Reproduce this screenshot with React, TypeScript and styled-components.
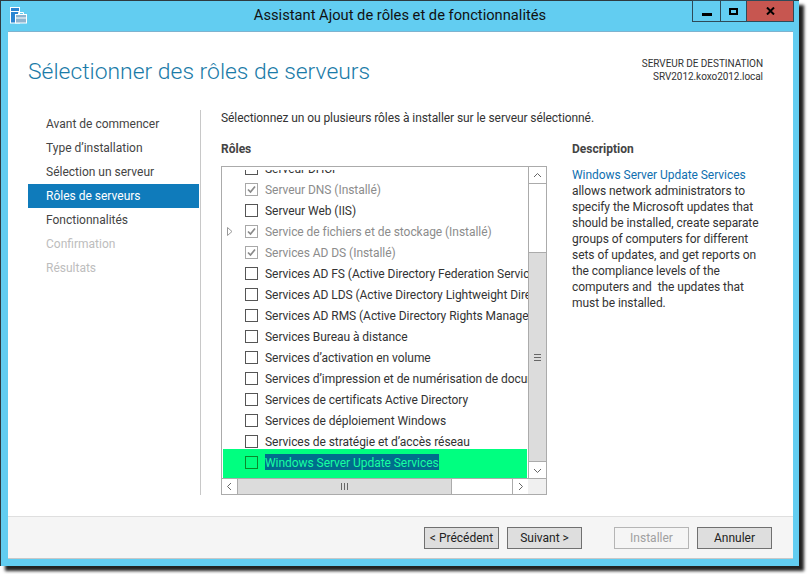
import React from "react";
import styled, { createGlobalStyle } from "styled-components";

const Global = createGlobalStyle`
  html, body { margin: 0; padding: 0; background: #fff; }
  body { min-width: 809px; min-height: 574px; font-family: Roboto, "Open Sans", "Liberation Sans", sans-serif; font-size: 12px; color: #333; }
`;

const Frame = styled.div`
  width: 799px; height: 566px; box-sizing: border-box;
  background: #62cdf1;
  border-top: 1px solid #2e3a40; border-left: 1px solid #2e3a40;
  box-shadow: 5px 5px 3px #222;
  display: flex; flex-direction: column;
`;
const TitleBar = styled.div`
  height: 30px; display: grid; grid-template-columns: 1fr auto 1fr; align-items: start;
`;
const AppIcon = styled.svg`margin: 6px 0 0 9px; display: block;`;
const Title = styled.div`font-size: 14.7px; color: #111; line-height: 29px;`;
const Controls = styled.div`display: flex; justify-content: flex-end; padding-right: 5px; margin-top: -1px;`;
const Control = styled.div<{ $w: number; $close?: boolean }>`
  width: ${p => p.$w}px; height: 22px; box-sizing: border-box;
  border: 1px solid #2e4a58; margin-left: -1px;
  background: ${p => (p.$close ? "#c75650" : "transparent")};
  display: flex; align-items: center; justify-content: center;
`;
const MinGlyph = styled.div`width: 10px; height: 3px; background: #000; margin-top: 6px;`;
const MaxGlyph = styled.div`width: 9px; height: 7px; border: 2px solid #000; box-sizing: border-box;`;

const Client = styled.div`
  flex: 1; margin: 0 6px 7px 7px; background: #fff; display: flex; flex-direction: column;
  border-top: 1px solid #7fb3cf;
`;
const Header = styled.header`
  height: 78px; box-sizing: border-box; padding: 23px 30px 0 20px; display: flex; justify-content: space-between;
`;
const Heading = styled.h1`
  margin: 0; font-weight: 300; font-size: 22.9px; line-height: 33px; color: #1a7ba8;
`;
const Destination = styled.div`
  text-align: right; font-size: 10px; line-height: 13px; color: #333; margin-top: 2px;
  letter-spacing: -0.05px;
`;
const Body = styled.div`flex: 1; display: flex; padding-left: 20px; min-height: 0;`;
const Nav = styled.nav`
  width: 173px; height: 385px; box-sizing: border-box; padding-top: 2px; border-right: 1px solid #c8c8c8;
`;
const NavItem = styled.div<{ $active?: boolean; $disabled?: boolean }>`
  height: 24px; line-height: 24px; padding-left: 18px; width: 171px; box-sizing: border-box;
  font-size: 12px;
  background: ${p => (p.$active ? "#0f7bbb" : "transparent")};
  color: ${p => (p.$active ? "#fff" : p.$disabled ? "#bdbdbd" : "#444")};
`;
const Main = styled.main`
  padding-left: 20px; flex: 1;
`;
const Intro = styled.p`margin: 0; line-height: 16px; height: 16px; font-size: 12px; color: #333; letter-spacing: -0.08px;`;
const Columns = styled.div`display: flex; margin-top: 15px;`;
const RolesCol = styled.section`width: 326px;`;
const DescCol = styled.aside`width: 190px; margin-left: 25px;`;
const Label = styled.h2`margin: 0; font-size: 12px; font-weight: 700; line-height: 16px; height: 24px; color: #444;`;

const ListBox = styled.div`
  width: 326px; height: 329px; box-sizing: border-box; border: 1px solid #ababab; margin-top: 1px;
  display: grid; grid-template-columns: 306px 18px; grid-template-rows: 311px 16px; background: #fff;
`;
const Rows = styled.div`overflow: hidden; position: relative; border-top: 3px solid #fff;`;
const RowsInner = styled.div`margin-top: -12px;`;
const Row = styled.div<{ $dim?: boolean; $hi?: boolean }>`
  height: 21px; display: flex; align-items: center; white-space: nowrap; position: relative; font-size: 12px;
  letter-spacing: -0.05px;
  color: ${p => (p.$dim ? "#8c8c8c" : p.$hi ? "#18ffa0" : "#333")};
  ${p => p.$hi && `&::before { content: ""; position: absolute; left: 1px; right: 1px; top: -3px; height: 29px; background: #00ff80; }`}
`;
const Expander = styled.span`width: 23px; flex: none; display: flex; justify-content: center; padding-right: 8px; box-sizing: border-box; position: relative;`;
const Box = styled.span<{ $dim?: boolean; $hi?: boolean }>`
  width: 13px; height: 13px; box-sizing: border-box; flex: none; position: relative;
  border: 1px solid ${p => (p.$hi ? "#0a8a2a" : p.$dim ? "#a8a8a8" : "#555")};
  display: flex; align-items: center; justify-content: center;
`;
const RowText = styled.span<{ $hi?: boolean }>`
  margin: 2px 0 0 7px; align-self: flex-start; height: 16px; box-sizing: border-box; padding-top: 2px;
  position: relative; line-height: 14px;
  background: ${p => (p.$hi ? "#006d8c" : "transparent")};
`;

const VScroll = styled.div`
  grid-column: 2; grid-row: 1; border-left: 1px solid #ababab; display: flex; flex-direction: column; background: #fff;
`;
const ArrowBtn = styled.div<{ $h?: boolean }>`
  flex: none; ${p => (p.$h ? "width: 15px; height: 100%;" : "height: 16px;")}
  display: flex; align-items: center; justify-content: center; background: #fff;
`;
const VUpper = styled.div`height: 68px; border-top: 1px solid #ababab; flex: none;`;
const VThumb = styled.div`
  flex: 1; background: #dcdcdc; border-top: 1px solid #ababab; border-bottom: 1px solid #ababab;
  display: flex; align-items: center; justify-content: center;
`;
const HScroll = styled.div`
  grid-column: 1; grid-row: 2; border-top: 1px solid #ababab; display: flex; background: #fff;
`;
const HThumb = styled.div`
  width: 213px; flex: none; background: #dcdcdc; border-left: 1px solid #ababab; border-right: 1px solid #ababab;
  display: flex; align-items: center; justify-content: center;
`;
const HRest = styled.div`flex: 1; border-right: 1px solid #ababab;`;
const Corner = styled.div`grid-column: 2; grid-row: 2; background: #f0f0f0; border-top: 1px solid #ababab;`;

const DescText = styled.p`margin: 0; font-size: 12px; line-height: 16px; color: #333; margin-top: 2px; white-space: pre; letter-spacing: -0.05px;`;
const DescLink = styled.span`color: #0f6fb0;`;

const Footer = styled.footer`
  height: 43px; box-sizing: border-box; background: #f5f5f5; border-top: 1px solid #dfdfdf;
  border-bottom: 1px solid #c8c8c8;
  display: flex; align-items: flex-start; padding: 10px 0 0 416px;
`;
const Button = styled.div<{ $disabled?: boolean; $gap?: number }>`
  width: 75px; height: 22px; box-sizing: border-box; margin-left: ${p => p.$gap ?? 0}px;
  border: 1px solid ${p => (p.$disabled ? "#b5b5b5" : "#707070")};
  background: ${p => (p.$disabled ? "#f5f5f5" : "#dedede")};
  color: ${p => (p.$disabled ? "#a0a0a0" : "#222")};
  font-size: 12px; line-height: 20px; text-align: center; white-space: nowrap;
`;

const Check = () => (
  <svg width="11" height="11" viewBox="0 0 11 11"><path d="M2 5.5 L4.5 8 L9 2.5" fill="none" stroke="#8a8a8a" strokeWidth="1.7" /></svg>
);
const Chevron = ({ d }: { d: string }) => (
  <svg width="9" height="9" viewBox="0 0 9 9"><path d={d} fill="none" stroke="#666" strokeWidth="1" /></svg>
);
const Grip = ({ vertical }: { vertical?: boolean }) => (
  <svg width="9" height="9" viewBox="0 0 9 9">
    {vertical
      ? <path d="M1.5 1V8M4.5 1V8M7.5 1V8" stroke="#666" strokeWidth="1" />
      : <path d="M1 1.5H8M1 4.5H8M1 7.5H8" stroke="#666" strokeWidth="1" />}
  </svg>
);

const roles: { t: string; dim?: boolean; checked?: boolean; exp?: boolean; hi?: boolean }[] = [
  { t: "Serveur DHCP" },
  { t: "Serveur DNS (Installé)", dim: true, checked: true },
  { t: "Serveur Web (IIS)" },
  { t: "Service de fichiers et de stockage (Installé)", dim: true, checked: true, exp: true },
  { t: "Services AD DS (Installé)", dim: true, checked: true },
  { t: "Services AD FS (Active Directory Federation Services)" },
  { t: "Services AD LDS (Active Directory Lightweight Directory Services)" },
  { t: "Services AD RMS (Active Directory Rights Management Services)" },
  { t: "Services Bureau à distance" },
  { t: "Services d’activation en volume" },
  { t: "Services d’impression et de numérisation de documents" },
  { t: "Services de certificats Active Directory" },
  { t: "Services de déploiement Windows" },
  { t: "Services de stratégie et d’accès réseau" },
  { t: "Windows Server Update Services", hi: true },
];
const nav = [
  { t: "Avant de commencer" },
  { t: "Type d’installation" },
  { t: "Sélection un serveur" },
  { t: "Rôles de serveurs", active: true },
  { t: "Fonctionnalités" },
  { t: "Confirmation", disabled: true },
  { t: "Résultats", disabled: true },
];

export default function App() {
  return (
    <>
      <Global />
      <Frame>
        <TitleBar>
          <AppIcon width="17" height="17" viewBox="0 0 17 17">
            <rect x="0.5" y="0.5" width="9" height="15.5" fill="#2a84d2" stroke="#fff" />
            <path d="M1 4.5H9" stroke="#fff" />
            <rect x="5.5" y="7.5" width="11" height="8.5" fill="#8fb4cf" stroke="#fff" />
            <path d="M8.5 7.5V5.5H13.5V7.5M6 11H16" fill="none" stroke="#fff" />
          </AppIcon>
          <Title>Assistant Ajout de rôles et de fonctionnalités</Title>
          <Controls>
            <Control $w={29}><MinGlyph /></Control>
            <Control $w={27}><MaxGlyph /></Control>
            <Control $w={48} $close>
              <svg width="9" height="8" viewBox="0 0 9 8"><path d="M1 0.5L8 7.5M8 0.5L1 7.5" stroke="#000" strokeWidth="2" /></svg>
            </Control>
          </Controls>
        </TitleBar>
        <Client>
          <Header>
            <Heading>Sélectionner des rôles de serveurs</Heading>
            <Destination>SERVEUR DE DESTINATION<br />SRV2012.koxo2012.local</Destination>
          </Header>
          <Body>
            <Nav>
              {nav.map(n => <NavItem key={n.t} $active={n.active} $disabled={n.disabled}>{n.t}</NavItem>)}
            </Nav>
            <Main>
              <Intro>Sélectionnez un ou plusieurs rôles à installer sur le serveur sélectionné.</Intro>
              <Columns>
                <RolesCol>
                  <Label>Rôles</Label>
                  <ListBox>
                    <Rows>
                      <RowsInner>
                        {roles.map(r => (
                          <Row key={r.t} $dim={r.dim} $hi={r.hi}>
                            <Expander>
                              {r.exp && <svg width="6" height="9" viewBox="0 0 6 9"><path d="M0.5 0.5L5 4.5L0.5 8.5Z" fill="none" stroke="#999" /></svg>}
                            </Expander>
                            <Box $dim={r.dim} $hi={r.hi}>{r.checked && <Check />}</Box>
                            <RowText $hi={r.hi}>{r.t}</RowText>
                          </Row>
                        ))}
                      </RowsInner>
                    </Rows>
                    <VScroll>
                      <ArrowBtn><Chevron d="M1 6L4.5 2.5L8 6" /></ArrowBtn>
                      <VUpper />
                      <VThumb><Grip /></VThumb>
                      <ArrowBtn><Chevron d="M1 3L4.5 6.5L8 3" /></ArrowBtn>
                    </VScroll>
                    <HScroll>
                      <ArrowBtn $h><Chevron d="M6 1L2.5 4.5L6 8" /></ArrowBtn>
                      <HThumb><Grip vertical /></HThumb>
                      <HRest />
                      <ArrowBtn $h><Chevron d="M3 1L6.5 4.5L3 8" /></ArrowBtn>
                    </HScroll>
                    <Corner />
                  </ListBox>
                </RolesCol>
                <DescCol>
                  <Label>Description</Label>
                  <DescText>
                    <DescLink>Windows Server Update Services</DescLink>{"\n"}
                    {"allows network administrators to\nspecify the Microsoft updates that\nshould be installed, create separate\ngroups of computers for different\nsets of updates, and get reports on\nthe compliance levels of the\ncomputers and  the updates that\nmust be installed."}
                  </DescText>
                </DescCol>
              </Columns>
            </Main>
          </Body>
          <Footer>
            <Button>&lt; Précédent</Button>
            <Button $gap={8}>Suivant &gt;</Button>
            <Button $disabled $gap={32}>Installer</Button>
            <Button $gap={8}>Annuler</Button>
          </Footer>
        </Client>
      </Frame>
    </>
  );
}
